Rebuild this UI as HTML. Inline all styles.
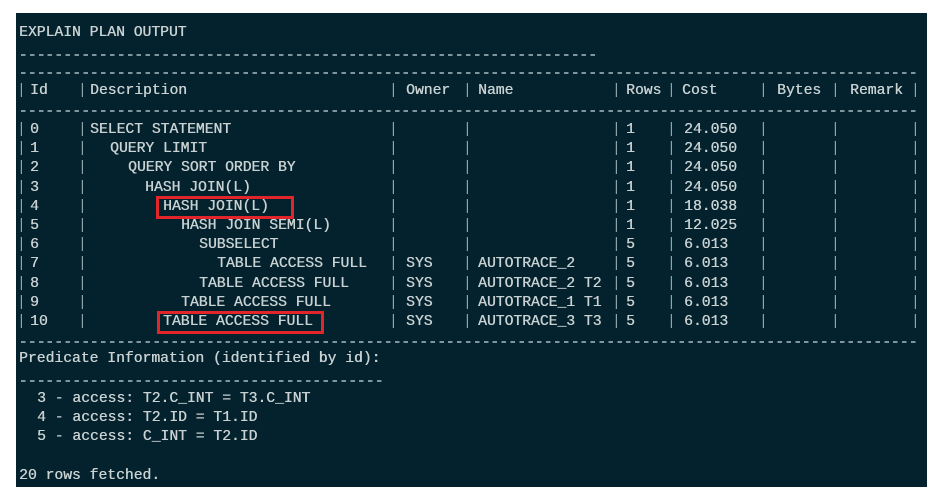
<!DOCTYPE html>
<html><head><meta charset="utf-8">
<style>
html,body{margin:0;padding:0;background:#fff;width:943px;height:498px;overflow:hidden}
#t{position:absolute;left:16px;top:13px;width:911px;height:474px;background:#04222e}
.x{position:absolute;font-family:"Liberation Mono",monospace;font-size:14.7px;line-height:18px;color:#c9d2d2;white-space:pre;text-shadow:0.4px 0 0 #c9d2d2}
.p{color:#8fa3aa;text-shadow:none}
.d{position:absolute;height:1.5px;background:repeating-linear-gradient(90deg,#7f969e 0 4.5px,transparent 4.5px 8.9px)}
.r{position:absolute;border:3px solid #e1252b;box-sizing:border-box}
</style></head><body>
<div id="t"></div>
<div id="c"></div>
<script>
var h='';
function T(x,y,s,c){h+='<div class="x'+(c?' '+c:'')+'" style="left:'+x+'px;top:'+(y-9)+'px">'+s+'</div>';}
function D(x1,x2,y){h+='<div class="d" style="left:'+x1+'px;width:'+(x2-x1)+'px;top:'+y+'px"></div>';}
var P=[21,82,393,467,616,671,763,835,915];
T(19,33,'EXPLAIN PLAN OUTPUT');
D(21,597,54);D(21,918,72);
P.forEach(function(x){T(x-4,91,'|','p');});
var hd=[[30,'Id'],[90,'Description'],[406,'Owner'],[478,'Name'],[626,'Rows'],[682,'Cost'],[777,'Bytes'],[850,'Remark']];
hd.forEach(function(a){T(a[0],91,a[1]);});
D(21,918,110);
var rows=[
['0',90,'SELECT STATEMENT','','','1','24.050'],
['1',110,'QUERY LIMIT','','','1','24.050'],
['2',128,'QUERY SORT ORDER BY','','','1','24.050'],
['3',145,'HASH JOIN(L)','','','1','24.050'],
['4',163,'HASH JOIN(L)','','','1','18.038'],
['5',181,'HASH JOIN SEMI(L)','','','1','12.025'],
['6',199,'SUBSELECT','','','5','6.013'],
['7',217,'TABLE ACCESS FULL','SYS','AUTOTRACE_2','5','6.013'],
['8',199,'TABLE ACCESS FULL','SYS','AUTOTRACE_2 T2','5','6.013'],
['9',181,'TABLE ACCESS FULL','SYS','AUTOTRACE_1 T1','5','6.013'],
['10',163,'TABLE ACCESS FULL','SYS','AUTOTRACE_3 T3','5','6.013']];
rows.forEach(function(r,i){
 var y=130+19.2*i;
 P.forEach(function(x){T(x-4,y,'|','p');});
 T(30,y,r[0]);T(r[1],y,r[2]);T(406,y,r[3]);T(478,y,r[4]);T(626,y,r[5]);T(684,y,r[6]);
});
D(21,918,341);
h+='<div class="r" style="left:156px;top:196px;width:138px;height:23px"></div>';
h+='<div class="r" style="left:157px;top:311px;width:167px;height:23px"></div>';
T(19,359,'Predicate Information (identified by id):');
D(21,385,380);
T(37,399,'3 - access: T2.C_INT = T3.C_INT');
T(37,418,'4 - access: T2.ID = T1.ID');
T(37,437,'5 - access: C_INT = T2.ID');
T(19,476,'20 rows fetched.');
document.getElementById('c').innerHTML=h;
</script>
</body></html>
